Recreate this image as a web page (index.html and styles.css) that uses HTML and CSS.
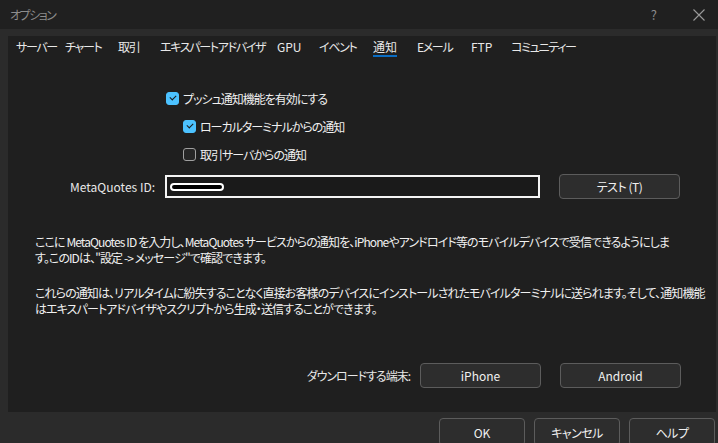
FILE: index.html
```html
<!DOCTYPE html>
<html lang="ja">
<head>
    <meta charset="UTF-8">
    <title>オプション</title>
    <link rel="stylesheet" href="styles.css">
</head>
<body>
    <div class="titlebar">
        <span class="title">オプション</span>
        <span class="help">?</span>
        <svg class="close" width="12" height="12" viewBox="0 0 12 12">
            <path d="M0.5 0.5 L11.5 11.5 M11.5 0.5 L0.5 11.5" stroke="#9a9a9a" stroke-width="1.1" fill="none"/>
        </svg>
    </div>

    <div class="window-body">
        <div class="panel">
            <div class="tabs">
                <span class="tab">サーバー</span>
                <span class="tab">チャート</span>
                <span class="tab">取引</span>
                <span class="tab">エキスパートアドバイザ</span>
                <span class="tab latin">GPU</span>
                <span class="tab">イベント</span>
                <span class="tab active">通知</span>
                <span class="tab">Eメール</span>
                <span class="tab latin">FTP</span>
                <span class="tab">コミュニティー</span>
            </div>

            <div class="options">
                <label class="check-row">
                    <span class="box checked"></span>プッシュ通知機能を有効にする
                </label>
                <label class="check-row sub">
                    <span class="box checked"></span>ローカルターミナルからの通知
                </label>
                <label class="check-row sub">
                    <span class="box"></span>取引サーバからの通知
                </label>
            </div>

            <div class="id-row">
                <span class="field-label latin">MetaQuotes ID:</span>
                <div class="id-input"><span class="redact"></span></div>
                <button class="btn">テスト (T)</button>
            </div>

            <p class="note">ここに MetaQuotes ID を入力し、MetaQuotes サービスからの通知を、iPhoneやアンドロイド等のモバイルデバイスで受信できるようにしま<br>す。このIDは、"設定 -&gt; メッセージ"で確認できます。</p>
            <p class="note second">これらの通知は、リアルタイムに紛失することなく直接お客様のデバイスにインストールされたモバイルターミナルに送られます。そして、通知機能<br>はエキスパートアドバイザやスクリプトから生成・送信することができます。</p>

            <div class="download-row">
                <span class="field-label">ダウンロードする端末:</span>
                <button class="btn latin">iPhone</button>
                <button class="btn latin">Android</button>
            </div>
        </div>
    </div>

    <div class="footer">
        <button class="btn small latin">OK</button>
        <button class="btn small">キャンセル</button>
        <button class="btn small">ヘルプ</button>
    </div>
</body>
</html>
```

FILE: styles.css
```css
* {
    margin: 0;
    padding: 0;
    box-sizing: border-box;
}

body {
    width: 718px;
    height: 443px;
    overflow: hidden;
    background: #2b2b2b;
    color: #f0f0f0;
    font-family: "Noto Sans CJK JP", "Noto Sans", sans-serif;
    font-size: 12px;
    font-feature-settings: "palt";
    letter-spacing: -1px;
}

.latin {
    letter-spacing: 0;
}

.titlebar {
    height: 29px;
    background: #202020;
    display: flex;
    align-items: center;
    padding: 0 7px 0 10px;
}

.title {
    color: #8c8c8c;
    flex: 1;
    letter-spacing: -1.5px;
}

.help {
    color: #8c8c8c;
    font-size: 13px;
    margin-right: 37px;
}

.close {
    margin-right: 6px;
}

.window-body {
    padding: 7px 2px 0 8px;
}

.panel {
    height: 376px;
    background: #1f1f1f;
    padding-left: 8px;
}

/* tabs */
.tabs {
    display: grid;
    grid-template-columns: 49px 53px 42px 117px 42px 54px 44px 54px 40px auto;
    justify-items: start;
}

.tab {
    padding-top: 3px;
    line-height: 16px;
    border-bottom: 2px solid transparent;
    color: #e8e8e8;
    white-space: nowrap;
    letter-spacing: -1.3px;
}

.tab.latin {
    letter-spacing: 0;
}

.tab.active {
    border-bottom-color: #0a6cc2;
    letter-spacing: 0;
}

/* checkboxes */
.options {
    margin-top: 31px;
    padding-left: 150px;
    display: flex;
    flex-direction: column;
    gap: 8px;
}

.check-row {
    height: 20px;
    display: flex;
    align-items: center;
    gap: 4px;
}

.check-row.sub {
    padding-left: 17px;
}

.box {
    width: 13px;
    height: 13px;
    border: 1px solid #a0a0a0;
    border-radius: 3px;
    background: #262626;
    position: relative;
}

.box.checked {
    border-color: #4cc2ff;
    background: #4cc2ff;
}

.box.checked::after {
    content: "";
    position: absolute;
    left: 3px;
    top: 2px;
    width: 5px;
    height: 3px;
    border-left: 1px solid #1a1a1a;
    border-bottom: 1px solid #1a1a1a;
    transform: rotate(-45deg);
}

/* id row */
.id-row,
.download-row {
    display: flex;
    align-items: center;
}

.id-row {
    margin-top: 10px;
    height: 25px;
}

.field-label {
    width: 149px;
    text-align: right;
    padding-right: 10px;
    color: #e8e8e8;
    white-space: nowrap;
}

.id-input {
    width: 375px;
    height: 23px;
    border: 2px solid #f4f4f4;
    background: #1a1a1a;
    margin-right: 19px;
    padding: 6px 0 0 3px;
}

.redact {
    display: block;
    width: 54px;
    height: 8px;
    border: 2px solid #ffffff;
    border-radius: 5px;
    background: #000;
}

.btn {
    width: 121px;
    height: 25px;
    border: 1px solid #5c5c5c;
    border-radius: 4px;
    background: #2d2d2d;
    color: #f0f0f0;
    font-family: inherit;
    font-size: 12px;
    font-feature-settings: "palt";
    letter-spacing: -0.5px;
}

.btn.latin {
    letter-spacing: 0;
}

/* notes */
.note {
    margin-top: 35px;
    padding-left: 19px;
    line-height: 16px;
    white-space: nowrap;
    color: #f0f0f0;
    letter-spacing: -0.9px;
}

.note.second {
    margin-top: 19px;
}

.download-row {
    margin-top: 46px;
    gap: 19px;
}

.download-row .field-label {
    width: 404px;
    margin-right: -19px;
}

/* footer */
.footer {
    display: flex;
    justify-content: flex-end;
    gap: 9px;
    padding: 6px 3px 0 0;
}

.btn.small {
    width: 86px;
    height: 28px;
}
```
